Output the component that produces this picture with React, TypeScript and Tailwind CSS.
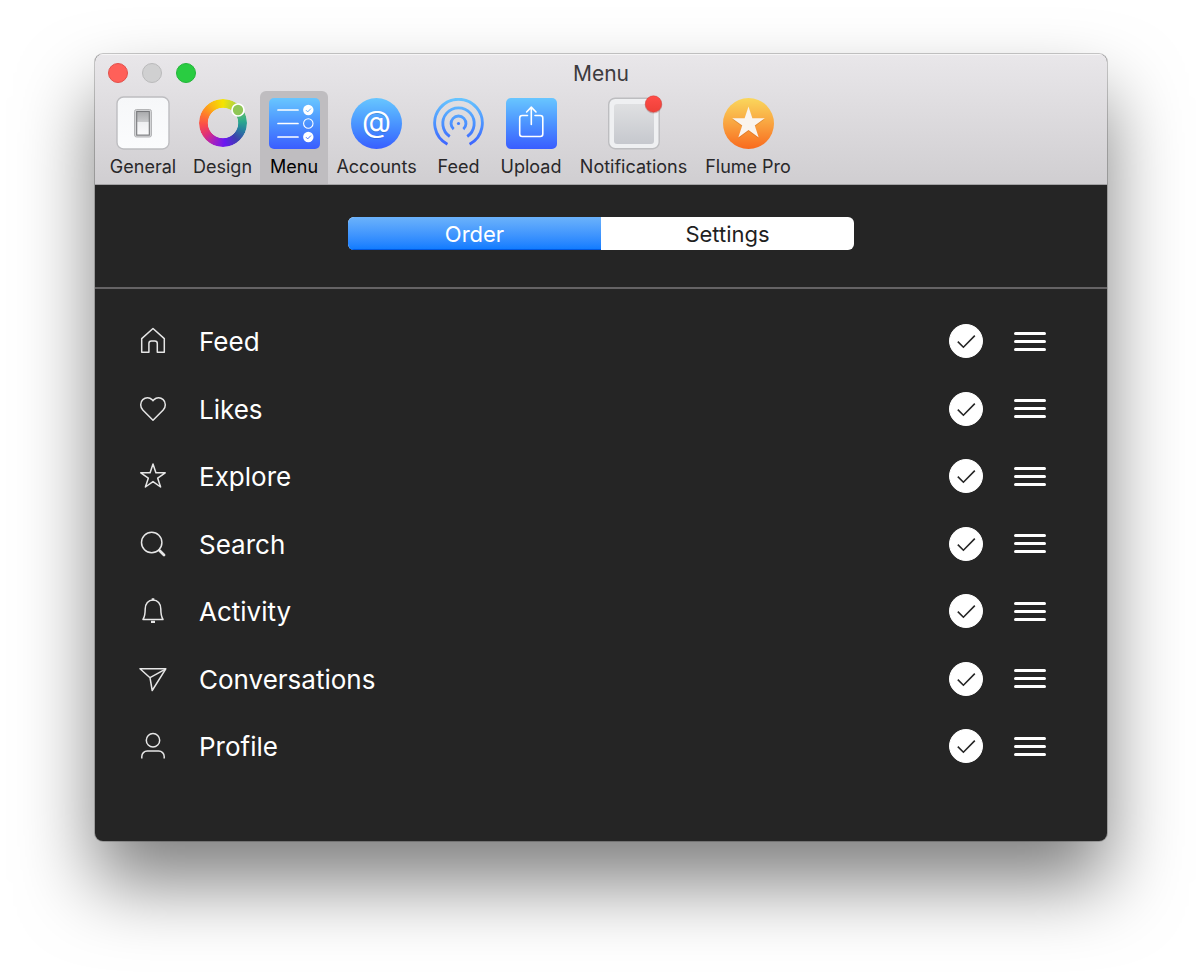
import React, { useState } from "react";

function GeneralIcon() {
  return (
    <svg width="54" height="54" viewBox="0 0 54 54" aria-hidden="true">
      <defs>
        <linearGradient id="plate" x1="0" y1="0" x2="0" y2="1">
          <stop offset="0" stopColor="#f6f7f9" />
          <stop offset="1" stopColor="#fbfcfd" />
        </linearGradient>
        <linearGradient id="rocker" x1="0" y1="0" x2="0" y2="1">
          <stop offset="0" stopColor="#a9aaac" />
          <stop offset="0.44" stopColor="#c9cacc" />
          <stop offset="0.46" stopColor="#eeeff1" />
          <stop offset="1" stopColor="#fafafb" />
        </linearGradient>
      </defs>
      <rect x="1" y="1" width="52" height="52" rx="6.5" fill="url(#plate)" stroke="#bdbdc0" strokeWidth="1.4" />
      <rect x="18.5" y="13.5" width="17" height="27.5" rx="2" fill="#d3d4d6" stroke="#b4b5b7" strokeWidth="1" />
      <rect x="20.7" y="15.5" width="12.6" height="23.6" fill="url(#rocker)" stroke="#77787b" strokeWidth="1.1" />
    </svg>
  );
}

function DesignIcon() {
  return (
    <span className="relative block size-12">
      <span className="block size-12 rounded-full bg-[conic-gradient(#f5e400_0deg,#b9d53c_30deg,#6cc067_55deg,#2ba98d_85deg,#27809f_110deg,#3c3fae_140deg,#6a17f2_175deg,#a21fc4_205deg,#dd3079_235deg,#fb4c4a_265deg,#ff7b2c_295deg,#fbb414_325deg,#f5e400_360deg)] [mask:radial-gradient(closest-side,transparent_62%,#000_65%)]" />
      <svg className="absolute left-8 top-1" width="14" height="14" viewBox="0 0 14 14" aria-hidden="true">
        <circle cx="7" cy="7" r="6" fill="#8fc657" stroke="#fff" strokeWidth="1.7" />
      </svg>
    </span>
  );
}

function Blue({ id }: { id: string }) {
  return (
    <linearGradient id={id} x1="0" y1="0" x2="0" y2="51" gradientUnits="userSpaceOnUse">
      <stop offset="0" stopColor="#68c6ff" />
      <stop offset="0.5" stopColor="#4c93ff" />
      <stop offset="1" stopColor="#3a5dff" />
    </linearGradient>
  );
}

function MenuIcon() {
  return (
    <svg width="51" height="51" viewBox="0 0 51 51" fill="none" aria-hidden="true">
      <defs><Blue id="menu-blue" /></defs>
      <rect width="51" height="51" rx="5" fill="url(#menu-blue)" />
      <path d="M9 12H29M9 25.500H29M9 39H29" stroke="#fff" strokeWidth="1.7" strokeLinecap="round" />
      <circle cx="39.300" cy="12" r="5.200" fill="#fff" />
      <circle cx="39.300" cy="25.500" r="4.700" stroke="#fff" strokeWidth="1.100" />
      <circle cx="39.300" cy="39" r="5.200" fill="#fff" />
      <path d="M37 12.200l1.700 1.700 3.200-3.300" stroke="#5fb0ff" strokeWidth="1" />
      <path d="M37 39.200l1.700 1.700 3.200-3.300" stroke="#4472ff" strokeWidth="1" />
    </svg>
  );
}

function AccountsIcon() {
  return (
    <span className="flex size-[51px] items-center justify-center rounded-full bg-linear-to-b from-[#68c6ff] to-[#3a5dff] pb-1 text-3xl leading-none text-white text-shadow-2xs">
      <span aria-hidden="true">@</span>
    </span>
  );
}

function FeedIcon() {
  return (
    <svg width="51" height="51" viewBox="0 0 52 52" fill="none" aria-hidden="true">
      <defs><Blue id="feed-blue" /></defs>
      <g stroke="url(#feed-blue)" strokeWidth="2.900">
        <path d="M14.700 47.100A24.300 24.300 0 1 1 37.300 47.100" />
        <path d="M17.100 39.300A16 16 0 1 1 34.900 39.300" />
        <path d="M21.100 31.800A7.600 7.600 0 1 1 30.900 31.800" />
      </g>
      <circle cx="26" cy="26" r="1.600" fill="#4080ff" />
    </svg>
  );
}

function UploadIcon() {
  return (
    <svg width="51" height="51" viewBox="0 0 51 51" fill="none" aria-hidden="true">
      <defs><Blue id="upload-blue" /></defs>
      <rect width="51" height="51" rx="5" fill="url(#upload-blue)" />
      <g stroke="#fff" strokeWidth="1.600" strokeLinecap="round" strokeLinejoin="round">
        <path d="M21.500 17.500H16.200a2.500 2.500 0 0 0-2.500 2.500V36a2.500 2.500 0 0 0 2.500 2.500H34.300a2.500 2.500 0 0 0 2.500-2.500V20a2.500 2.500 0 0 0-2.500-2.500H29" />
        <path d="M25.300 26.500V9.300M20.600 14l4.700-4.900 4.700 4.900" />
      </g>
    </svg>
  );
}

function NotificationsIcon() {
  return (
    <svg width="54" height="54" viewBox="0 0 54 54" className="overflow-visible" aria-hidden="true">
      <defs>
        <linearGradient id="well" x1="0" y1="0" x2="0" y2="1">
          <stop offset="0" stopColor="#dfe0e2" />
          <stop offset="1" stopColor="#c6c8ce" />
        </linearGradient>
        <linearGradient id="badge" x1="0" y1="0" x2="0" y2="1">
          <stop offset="0" stopColor="#ff4d48" />
          <stop offset="1" stopColor="#ee4038" />
        </linearGradient>
      </defs>
      <rect x="1.700" y="2.200" width="50.500" height="50.500" rx="6.500" fill="#eff0f2" stroke="#bdbdc0" strokeWidth="1.400" />
      <rect x="7" y="8" width="40" height="40" rx="3" fill="url(#well)" />
      <circle cx="46.500" cy="8.700" r="8.800" fill="#7b2a2a" opacity="0.250" />
      <circle cx="46.500" cy="8" r="8.200" fill="url(#badge)" stroke="#d2403b" strokeWidth="0.500" />
    </svg>
  );
}

function ProIcon() {
  return (
    <svg width="51" height="51" viewBox="0 0 51 51" aria-hidden="true">
      <defs>
        <linearGradient id="sunset" x1="0" y1="0" x2="0" y2="1">
          <stop offset="0" stopColor="#fad75c" />
          <stop offset="0.5" stopColor="#f9a440" />
          <stop offset="1" stopColor="#f96a1d" />
        </linearGradient>
      </defs>
      <circle cx="25.500" cy="25.500" r="25.500" fill="url(#sunset)" />
      <path transform="translate(0 1)" fill="#a8541a" opacity="0.300" d="M25.500 8.500l3.900 11.700h12.400l-10 7.300 3.900 11.900-10.200-7.400-10.200 7.400 3.900-11.900-10-7.300h12.400z" />
      <path fill="#faf4ee" d="M25.500 8.500l3.900 11.700h12.400l-10 7.300 3.900 11.900-10.200-7.400-10.200 7.400 3.900-11.900-10-7.300h12.400z" />
    </svg>
  );
}

const tools = [
  { label: "General", icon: <GeneralIcon />, width: "min-w-[84px]" },
  { label: "Design", icon: <DesignIcon />, width: "min-w-[75px]" },
  { label: "Menu", icon: <MenuIcon />, width: "min-w-[68px]" },
  { label: "Accounts", icon: <AccountsIcon />, width: "min-w-[97px]" },
  { label: "Feed", icon: <FeedIcon />, width: "min-w-[67px]" },
  { label: "Upload", icon: <UploadIcon />, width: "min-w-[78px]" },
  { label: "Notifications", icon: <NotificationsIcon />, width: "min-w-[127px]" },
  { label: "Flume Pro", icon: <ProIcon />, width: "min-w-[102px]" },
];

const rows = [
  { label: "Feed", art: <path d="M2.700 25.300V11.600L14 1.500 25.300 11.600V25.300H18.300V16.500a2.500 2.500 0 0 0-2.500-2.500H12.400a2.500 2.500 0 0 0-2.500 2.500V25.300z" /> },
  { label: "Likes", art: <path d="M14 25.200L3.800 15C1 12.100 1 7.200 3.800 4.600 6.600 2 10.600 2.200 13 4.600L14 5.700 15 4.600C17.400 2.200 21.400 2 24.200 4.600 27 7.200 27 12.100 24.200 15z" /> },
  { label: "Explore", art: <path d="M14 2l2.900 8.800H26.200L18.700 16.200 21.600 25 14 19.600 6.400 25 9.300 16.200 1.800 10.800H11.100z" /> },
  {
    label: "Search",
    art: (
      <>
        <circle cx="12.700" cy="12.500" r="10.200" />
        <path d="M19.500 19.500L22 22" />
        <path d="M20.500 20.500L25 25" strokeWidth="2.800" strokeLinecap="round" />
      </>
    ),
  },
  {
    label: "Activity",
    art: (
      <>
        <path d="M4 22.500C5.800 19.500 6.200 17 6.200 12 6.200 6.800 9.300 3 14 3s7.800 3.800 7.800 9c0 5 .4 7.500 2.200 10.500z" />
        <path d="M12.700 2.400h2.600M12 24.900h4" strokeWidth="2.200" />
      </>
    ),
  },
  {
    label: "Conversations",
    art: (
      <>
        <path d="M1 3.800H26.800L13.200 25.500 11 12.700z" />
        <path d="M11 12.700L26.500 4.200" />
      </>
    ),
  },
  {
    label: "Profile",
    art: (
      <>
        <circle cx="14" cy="8.200" r="6.700" />
        <path d="M2.800 26.500V24.500a5.500 5.500 0 0 1 5.500-5.500H19.700a5.500 5.500 0 0 1 5.500 5.500v2" />
      </>
    ),
  },
];

const segments = ["Order", "Settings"];

export default function App() {
  const [tool, setTool] = useState("Menu");
  const [segment, setSegment] = useState("Order");

  return (
    <div className="min-h-screen bg-white pt-[54px] pr-[93px] pb-[139px] pl-[95px] font-['Inter',sans-serif]">
      <main className="overflow-hidden rounded-lg bg-[#252525] pb-[61px] shadow-[0_0_0_1px_rgba(0,0,0,0.2),0_42px_75px_rgba(0,0,0,0.5)]">
        <header className="border-b border-[#a3a2a4] bg-linear-to-b from-[#e9e7ea] to-[#d0ced1] shadow-[inset_0_1px_0_#f6f5f6]">
          <div className="grid h-[37px] grid-cols-3 items-center px-[13px]">
            <div className="flex gap-3.5">
              <button aria-label="Close" className="size-5 rounded-full border border-[#e2504b] bg-[#ff6059]" />
              <button aria-label="Minimize" className="size-5 rounded-full border border-[#bababb] bg-[#d0d0d1]" />
              <button aria-label="Zoom" className="size-5 rounded-full border border-[#23b53a] bg-[#29cc41]" />
            </div>
            <h1 className="pt-0.5 text-center text-[21px] leading-6 text-[#3d3b3e]">Menu</h1>
          </div>
          <nav className="flex pl-1.5" aria-label="Preferences">
            {tools.map((t) => (
              <button
                key={t.label}
                onClick={() => setTool(t.label)}
                className={`${t.width} flex h-[93px] flex-col items-center rounded-t-md px-2 pt-1 text-lg leading-6 text-[#29282a] ${tool === t.label ? "bg-[#bfbdc0] text-black" : ""}`}
              >
                <span className="flex h-14 items-center">{t.icon}</span>
                <span className="mt-1">{t.label}</span>
              </button>
            ))}
          </nav>
        </header>

        <div className="flex h-[104px] justify-center border-b-2 border-[#656365] pt-8">
          <div role="tablist" className="grid h-[33px] w-1/2 grid-cols-2 overflow-hidden rounded-md bg-white">
            {segments.map((s) => (
              <button
                key={s}
                role="tab"
                aria-selected={segment === s}
                onClick={() => setSegment(s)}
                className={`text-[22px] leading-8 ${segment === s ? "bg-linear-to-b from-[#6bb2fb] to-[#0a7aff] text-white shadow-[inset_0_-1px_0_#0058e0]" : "text-[#1f1f1f]"}`}
              >
                {s}
              </button>
            ))}
          </div>
        </div>

        <ul className="pt-[18px] pr-[61px] pl-11">
          {rows.map((r) => (
            <li key={r.label} className="flex items-center odd:h-[68px] even:h-[67px]">
              <svg width="28" height="28" viewBox="0 0 28 28" fill="none" stroke="#e6e6e6" strokeWidth="1.5" strokeLinejoin="round" aria-hidden="true">
                {r.art}
              </svg>
              <label htmlFor={r.label} className="ml-8 flex-1 pt-0.5 text-[26px] leading-8 text-white">
                {r.label}
              </label>
              <span className="grid size-[34px] place-items-center">
                <input
                  id={r.label}
                  type="checkbox"
                  defaultChecked
                  className="peer col-start-1 row-start-1 size-[34px] appearance-none rounded-full border border-white checked:bg-white"
                />
                <svg className="pointer-events-none col-start-1 row-start-1 hidden peer-checked:block" width="34" height="34" viewBox="0 0 34 34" fill="none" stroke="#252525" strokeWidth="1.6" aria-hidden="true">
                  <path d="M8.800 17.600L14.400 23.200 25.800 11.600" />
                </svg>
              </span>
              <button aria-label={`Reorder ${r.label}`} className="ml-[31px] flex h-8 w-8 cursor-grab flex-col justify-center gap-[5px]">
                <span className="h-[3px] w-full rounded-sm bg-white" />
                <span className="h-[3px] w-full rounded-sm bg-white" />
                <span className="h-[3px] w-full rounded-sm bg-white" />
              </button>
            </li>
          ))}
        </ul>
      </main>
    </div>
  );
}
